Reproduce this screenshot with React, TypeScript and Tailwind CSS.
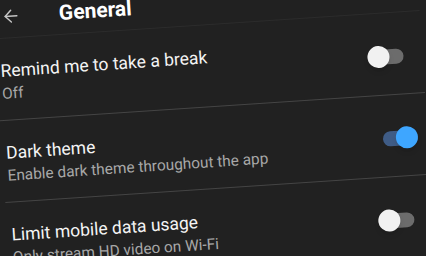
import { ArrowLeft } from "lucide-react";

const settings = [
  {
    id: 1,
    title: "Remind me to take a break",
    subtitle: "Off",
    on: false,
  },
  {
    id: 2,
    title: "Dark theme",
    subtitle: "Enable dark theme throughout the app",
    on: true,
  },
  {
    id: 3,
    title: "Limit mobile data usage",
    subtitle: "Only stream HD video on Wi-Fi",
    on: false,
  },
];

const Toggle = ({ on }: { on: boolean }) => {
  return on ? (
    <div className="relative flex items-center w-[35px] h-[15px] mr-[10px] rounded-full bg-[#3f5c86]">
      <div className="absolute right-0 w-[22px] h-[22px] rounded-full bg-[#3ea6ff] shadow-md" />
    </div>
  ) : (
    <div className="relative flex items-center w-[36px] h-[15px] mr-[19px] rounded-full bg-[#6c6c6c]">
      <div className="absolute left-0 w-[22px] h-[22px] rounded-full bg-[#f1f1f1] shadow-md" />
    </div>
  );
};

const App = () => {
  return (
    <div className="w-[426px] h-[256px] overflow-hidden bg-[#212121] font-['Roboto',sans-serif]">
      <div className="w-[426px] h-[256px] -rotate-[3.8deg]">
        <div className="-mt-[13px] h-[38px] flex items-start border-b border-[#2c2c2c]">
          <div className="w-[36px] h-[28px] flex items-center justify-center pt-[4px]">
            <ArrowLeft size={20} strokeWidth={1.8} className="text-[#c4c4c4]" />
          </div>
          <h1 className="ml-[30px] pt-[2px] text-[21px] leading-[28px] font-bold text-white">
            General
          </h1>
        </div>

        {settings.map((item) => (
          <div
            key={item.id}
            className="flex items-center justify-between pl-[4px] pt-[21px] pb-[16px] border-b border-[#454545]"
          >
            <div>
              <h3 className="text-[17.5px] leading-[22px] text-[#f4f4f4]">
                {item.title}
              </h3>
              <p className="mt-[2px] text-[15.4px] leading-[20px] text-[#a8a8a8]">
                {item.subtitle}
              </p>
            </div>
            <Toggle on={item.on} />
          </div>
        ))}
      </div>
    </div>
  );
};

export default App;
